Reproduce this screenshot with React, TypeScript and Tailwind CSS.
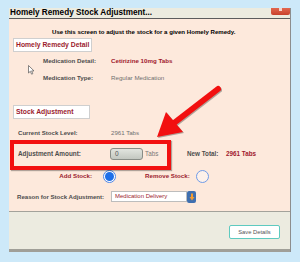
import React from "react";

const F = { fontFamily: '"Liberation Sans", Arial, sans-serif' };

function RadioOn() {
  return (
    <div className="w-[13px] h-[13px] rounded-full border border-[#4f86e6] bg-white flex items-center justify-center">
      <div className="w-[9px] h-[9px] rounded-full bg-[#1f6fe8]" />
    </div>
  );
}
function RadioOff() {
  return <div className="w-[13px] h-[13px] rounded-full border border-[#6f9be8] bg-[#fdf1ea]" />;
}

export default function App() {
  return (
    <div className="w-[300px] h-[262px] bg-[#cde9f9] relative overflow-hidden pt-[8px] pl-[9px]" style={F}>
      <div className="w-[282px] h-[244px] flex flex-col border-r border-[#8d8d8d]">
        {/* title bar */}
        <div className="h-[11px] bg-[#ecebdf] border-b border-[#5c5c5c] flex items-start justify-between">
          <div className="text-[8.2px] font-bold text-black leading-[10px] pl-[1px]">Homely Remedy Stock Adjustment...</div>
          <div className="w-[19px] h-[7px] bg-gradient-to-b from-[#e2674f] to-[#c8402c] rounded-b-[2px] flex items-start justify-center">
            <div className="w-[3px] h-[3px] bg-[#f5d5cc]" />
          </div>
        </div>
        {/* content */}
        <div className="h-[192px] bg-[#fde9dc] flex flex-col">
          <div className="mt-[9px] h-[8px] pl-[43px] text-[6.1px] font-bold text-black leading-[8px] whitespace-nowrap">
            Use this screen to adjust the stock for a given Homely Remedy.
          </div>
          <div className="mt-[2px] ml-[4px] w-[79px] h-[14px] bg-white border border-[#cfcfcf] flex items-center pl-[2px] text-[6.8px] font-bold text-[#9c1c2e] whitespace-nowrap">
            Homely Remedy Detail
          </div>
          <div className="mt-[5px] h-[8px] flex items-center pl-[34px] text-[6.2px] whitespace-nowrap">
            <div className="w-[68px] font-bold text-[#4d4d4d]">Medication Detail:</div>
            <div className="font-bold text-[#a0182c]">Cetirizine 10mg Tabs</div>
          </div>
          <div className="mt-[9px] h-[8px] flex items-center pl-[34px] text-[6.2px] whitespace-nowrap">
            <div className="w-[68px] font-bold text-[#4d4d4d]">Medication Type:</div>
            <div className="text-[#707070]">Regular Medication</div>
          </div>
          <div className="mt-[23px] ml-[4px] w-[77px] h-[14px] bg-white border border-[#cfcfcf] flex items-center pl-[2px] text-[6.8px] font-bold text-[#9c1c2e] whitespace-nowrap">
            Stock Adjustment
          </div>
          <div className="mt-[10px] h-[8px] flex items-center pl-[9px] text-[6.1px] whitespace-nowrap">
            <div className="w-[93px] font-bold text-[#4d4d4d]">Current Stock Level:</div>
            <div className="text-[#707070]">2961 Tabs</div>
          </div>
          <div className="mt-[11px] h-[12px] flex items-center pl-[9px] text-[6.3px] whitespace-nowrap">
            <div className="w-[92px] font-bold text-[#4d4d4d] text-[6.4px]">Adjustment Amount:</div>
            <div className="w-[33px] h-[12px] rounded-[3px] border border-[#888c86] bg-gradient-to-b from-[#e2e5df] to-[#c3c7c0] flex items-center pl-[4px] text-[#555] text-[6.5px]">0</div>
            <div className="ml-[2px] w-[42px] text-[#7a7a7a]">Tabs</div>
            <div className="w-[39px] font-bold text-[#4d4d4d]">New Total:</div>
            <div className="font-bold text-[#a0182c]">2961 Tabs</div>
          </div>
          <div className="mt-[10px] h-[12px] flex items-center text-[6.2px] font-bold text-[#9c1c2e] whitespace-nowrap">
            <div className="w-[83px] text-right">Add Stock:</div>
            <div className="ml-[11px]"><RadioOn /></div>
            <div className="ml-[29px] w-[51px]">Remove Stock:</div>
            <RadioOff />
          </div>
          <div className="mt-[9px] h-[11px] flex items-center pl-[8px] text-[6.1px] whitespace-nowrap">
            <div className="w-[94px] font-bold text-[#4d4d4d]">Reason for Stock Adjustment:</div>
            <div className="w-[76px] h-[11px] bg-white border border-[#bdbdbd] flex items-center pl-[3px] text-[#9c1c2e] text-[6px]">Medication Delivery</div>
            <div className="w-[9px] h-[12px] bg-[#3f6fb0] rounded-[2px] flex items-center justify-center">
              <svg width="6" height="8" viewBox="0 0 6 8">
                <rect x="2" y="0.5" width="2" height="4" fill="#f39a2e" />
                <path d="M0.5 4 L5.5 4 L3 7.5 Z" fill="#f39a2e" />
              </svg>
            </div>
          </div>
        </div>
        {/* footer */}
        <div className="flex-1 bg-[#ecebe0] border-t border-[#a3a29b] border-b-[3px] border-b-[#a09f98] flex justify-end items-start pt-[13px] pr-[10px]">
          <div className="w-[51px] h-[14px] rounded-[2px] border-[1.5px] border-[#5ecac0] bg-white flex items-center justify-center text-[5.8px] text-[#555]">
            Save Details
          </div>
        </div>
      </div>

      {/* annotation: red box */}
      <div className="absolute left-[10px] top-[140px] w-[161px] h-[30px] border-[4px] border-[#f21010] shadow-[1px_1px_1px_rgba(0,0,0,0.3)]" />
      {/* annotation: red arrow */}
      <svg className="absolute left-0 top-0" width="300" height="262" viewBox="0 0 300 262">
        <g transform="translate(1,1)" opacity="0.3">
          <line x1="218" y1="89" x2="174" y2="123" stroke="#000" strokeWidth="6" strokeLinecap="round" />
          <path d="M157 137 L166 112 L183 132 Z" fill="#000" />
        </g>
        <line x1="218" y1="89" x2="174" y2="123" stroke="#f21010" strokeWidth="6" strokeLinecap="round" />
        <path d="M157 137 L166 112 L183 132 Z" fill="#f21010" />
      </svg>
      {/* mouse cursor */}
      <svg className="absolute left-[28px] top-[65px]" width="7" height="10" viewBox="0 0 7 10">
        <path d="M0.5 0.5 L0.5 8 L2.3 6.3 L3.6 9.2 L4.8 8.7 L3.6 5.9 L6 5.9 Z" fill="#fff" stroke="#555" strokeWidth="0.7" />
      </svg>
    </div>
  );
}
